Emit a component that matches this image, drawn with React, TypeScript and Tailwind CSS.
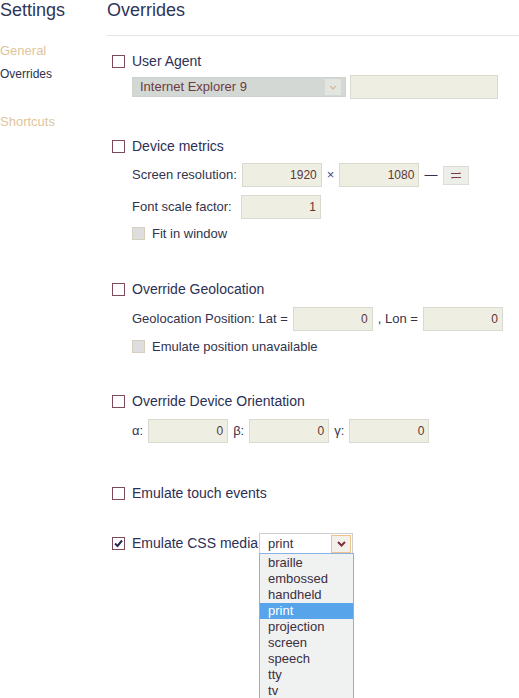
import React from 'react'

const font = { fontFamily: '"Liberation Sans", Arial, sans-serif' }

function Box({ checked = false, disabled = false }: { checked?: boolean; disabled?: boolean }) {
  if (disabled) {
    return <span className="block size-[13px] shrink-0 border border-[#d6cfc0] bg-[#dedede]" />
  }
  return (
    <span className="flex size-[13px] shrink-0 items-center justify-center border border-[#7d4a5c] bg-white">
      {checked && (
        <svg width="9" height="9" viewBox="0 0 9 9">
          <path d="M1 4.5 L3.5 7 L8 1.5" fill="none" stroke="#2a2b52" strokeWidth="2" />
        </svg>
      )}
    </span>
  )
}

function Check({ label, checked }: { label: string; checked?: boolean }) {
  return (
    <div className="flex h-[17px] items-center gap-[7px] text-[14px] leading-[17px] text-[#2d2f55]">
      <Box checked={checked} />
      <span>{label}</span>
    </div>
  )
}

function SubCheck({ label }: { label: string }) {
  return (
    <div className="flex h-[17px] items-center gap-[7px] pl-[20px] text-[13px] leading-[17px] text-[#33334d]">
      <Box disabled />
      <span>{label}</span>
    </div>
  )
}

function Field({ value = '', w = 80 }: { value?: string; w?: number }) {
  return (
    <div
      className="flex h-[24px] shrink-0 items-center justify-end border border-[#d9d9cf] bg-[#eeeee3] pr-[4px] text-[12px] text-[#5b3838]"
      style={{ width: w }}
    >
      {value}
    </div>
  )
}

const media = ['braille', 'embossed', 'handheld', 'print', 'projection', 'screen', 'speech', 'tty', 'tv']

export default function App() {
  return (
    <div className="flex min-h-[698px] bg-white" style={font}>
      <aside className="w-[107px] shrink-0">
        <h1 className="text-[18px] leading-[20px] text-[#2f3558]">Settings</h1>
        <div className="mt-[23px] text-[13px] leading-[16px] text-[#e0c59c]">General</div>
        <div className="mt-[7px] text-[12px] leading-[16px] text-[#2d2f50]">Overrides</div>
        <div className="mt-[32px] text-[13px] leading-[16px] text-[#e0c59c]">Shortcuts</div>
      </aside>

      <main className="flex-1">
        <div className="h-[36px] border-b border-[#e6e6e6]">
          <h2 className="text-[18px] leading-[20px] text-[#2f3558]">Overrides</h2>
        </div>

        <div className="pl-[5px]">
          {/* user agent */}
          <div className="mt-[17px]">
            <Check label="User Agent" />
            <div className="mt-[5px] flex h-[24px] items-center gap-[4px] pl-[20px]">
              <div className="flex h-[20px] w-[214px] items-center justify-between border border-[#cfd3d0] bg-[#d4d8d5] pl-[7px] pr-[4px] text-[13px] text-[#6d3b3d]">
                <span>Internet Explorer 9</span>
                <span className="flex size-[16px] items-center justify-center bg-[#e3e5e1]">
                  <svg width="8" height="5" viewBox="0 0 8 5">
                    <path d="M1 1 L4 4 L7 1" fill="none" stroke="#d7b892" strokeWidth="1.2" />
                  </svg>
                </span>
              </div>
              <Field w={148} />
            </div>
          </div>

          {/* device metrics */}
          <div className="mt-[39px]">
            <Check label="Device metrics" />
            <div className="mt-[8px] flex h-[24px] items-center gap-[5px] pl-[20px] text-[13px] text-[#33334d]">
              <span>Screen resolution:</span>
              <Field value="1920" />
              <span className="text-[#3a4a8a]">×</span>
              <Field value="1080" />
              <span>—</span>
              <div className="ml-[1px] flex h-[19px] w-[26px] items-center justify-center border border-[#dcdcd6] bg-[#eceee9]">
                <svg width="12" height="7" viewBox="0 0 12 7">
                  <path d="M1 1.5 H11 M1 5.5 H11" stroke="#7b3a48" strokeWidth="1.2" />
                  <path d="M9 0 L11 1.5" stroke="#e8a070" strokeWidth="1" />
                  <path d="M3 7 L1 5.5" stroke="#e8a070" strokeWidth="1" />
                </svg>
              </div>
            </div>
            <div className="mt-[8px] flex h-[24px] items-center gap-[5px] pl-[20px] text-[13px] text-[#33334d]">
              <span className="w-[104px]">Font scale factor:</span>
              <Field value="1" />
            </div>
            <div className="mt-[6px]">
              <SubCheck label="Fit in window" />
            </div>
          </div>

          {/* geolocation */}
          <div className="mt-[39px]">
            <Check label="Override Geolocation" />
            <div className="mt-[9px] flex h-[24px] items-center gap-[5px] pl-[20px] text-[13px] text-[#33334d]">
              <span>Geolocation Position: Lat =</span>
              <Field value="0" />
              <span>, Lon =</span>
              <Field value="0" />
            </div>
            <div className="mt-[7px]">
              <SubCheck label="Emulate position unavailable" />
            </div>
          </div>

          {/* orientation */}
          <div className="mt-[38px]">
            <Check label="Override Device Orientation" />
            <div className="mt-[9px] flex h-[24px] items-center gap-[5px] pl-[20px] text-[13px] text-[#33334d]">
              <span>α:</span>
              <Field value="0" />
              <span>β:</span>
              <Field value="0" />
              <span>γ:</span>
              <Field value="0" />
            </div>
          </div>

          {/* touch */}
          <div className="mt-[42px]">
            <Check label="Emulate touch events" />
          </div>

          {/* css media */}
          <div className="mt-[33px] flex h-[17px] items-center gap-px text-[14px] text-[#2d2f55]">
            <div className="flex items-center gap-[7px]">
              <Box checked />
              <span>Emulate CSS media</span>
            </div>
            <div className="relative">
              <div className="flex h-[21px] w-[94px] items-center justify-between border border-[#cfcfcf] bg-white pl-[8px] pr-px text-[13px] text-[#3a2f45]">
                <span>print</span>
                <span className="flex h-[18px] w-[20px] items-center justify-center border border-[#ecc38c] bg-[#f3efe9]">
                  <svg width="9" height="6" viewBox="0 0 9 6">
                    <path d="M1 1 L4.5 4.5 L8 1" fill="none" stroke="#7a2e42" strokeWidth="2" />
                  </svg>
                </span>
              </div>
              <ul className="absolute left-0 top-[20px] w-[95px] border border-[#86b2e6] bg-[#f0f1f1] py-px text-[13px] leading-[16px] text-[#3b2f40]">
                {media.map((m) => (
                  <li
                    key={m}
                    className={m === 'print' ? 'h-[16px] bg-[#58a4ea] pl-[8px] text-white' : 'h-[16px] pl-[8px]'}
                  >
                    {m}
                  </li>
                ))}
              </ul>
            </div>
          </div>
        </div>
      </main>
    </div>
  )
}
